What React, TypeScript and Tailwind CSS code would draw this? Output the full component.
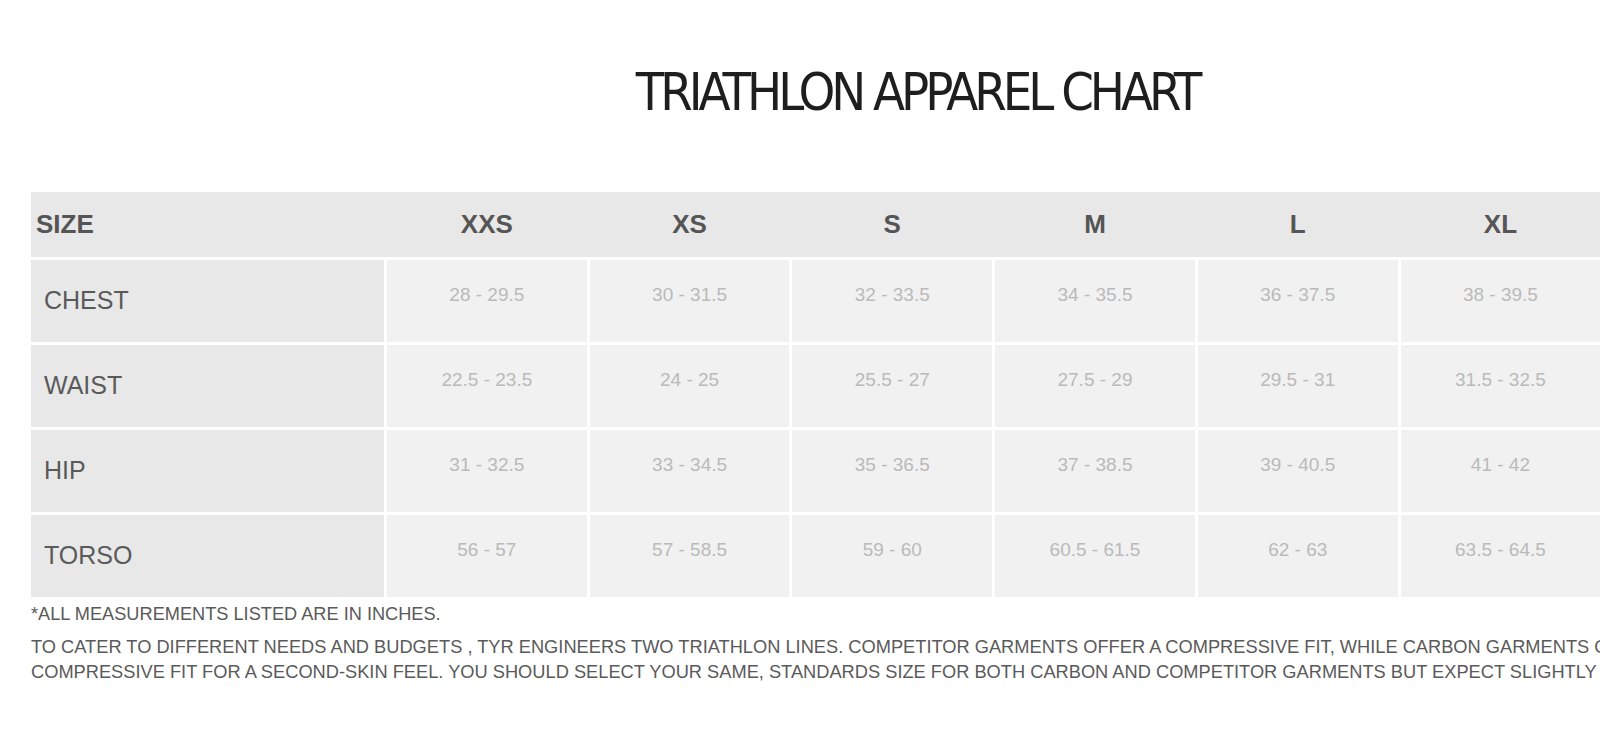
import React from "react";

const sizes = ["XXS", "XS", "S", "M", "L", "XL", "XXL"];
const rows: { label: string; values: string[] }[] = [
  { label: "CHEST", values: ["28 - 29.5", "30 - 31.5", "32 - 33.5", "34 - 35.5", "36 - 37.5", "38 - 39.5", "40 - 41.5"] },
  { label: "WAIST", values: ["22.5 - 23.5", "24 - 25", "25.5 - 27", "27.5 - 29", "29.5 - 31", "31.5 - 32.5", "33 - 34.5"] },
  { label: "HIP", values: ["31 - 32.5", "33 - 34.5", "35 - 36.5", "37 - 38.5", "39 - 40.5", "41 - 42", "42.5 - 44"] },
  { label: "TORSO", values: ["56 - 57", "57 - 58.5", "59 - 60", "60.5 - 61.5", "62 - 63", "63.5 - 64.5", "65 - 66"] },
];

export default function App() {
  return (
    <div className="w-[1600px] h-[746px] overflow-hidden bg-white">
      <div className="w-[1834px] pt-[66px]" style={{ fontFamily: '"Liberation Sans", Arial, sans-serif' }}>
        <h1
          className="text-center text-[52px] leading-[52px] text-[#1e1e1e] tracking-[-4px] font-normal"
          style={{ fontFamily: '"Liberation Sans Narrow", "DejaVu Sans Condensed", "Liberation Sans", sans-serif' }}
        >
          TRIATHLON APPAREL CHART
        </h1>
        <div className="ml-[31px] w-[1772px] mt-[74px]">
          <div className="grid grid-cols-[353px_repeat(7,1fr)] gap-x-[3px] h-[65px] bg-[#e8e8e8] items-center text-[26px] font-bold text-[#555555]">
            <div className="pl-[5px]">SIZE</div>
            {sizes.map((s) => (
              <div key={s} className="text-center">{s}</div>
            ))}
          </div>
          {rows.map((r) => (
            <div key={r.label} className="grid grid-cols-[353px_repeat(7,1fr)] gap-x-[3px] h-[82px] mt-[3px]">
              <div className="bg-[#e8e8e8] flex items-center pl-[13px] text-[25px] text-[#5a5a5a]">{r.label}</div>
              {r.values.map((v, i) => (
                <div key={i} className="bg-[#f1f1f1] flex items-center justify-center pb-[12px] text-[19px] text-[#bababa]">
                  {v}
                </div>
              ))}
            </div>
          ))}
          <div className="mt-[6px] text-[18.2px] leading-[22px] text-[#5a5a5a]">*ALL MEASUREMENTS LISTED ARE IN INCHES.</div>
          <div className="mt-[9px] text-[18.25px] leading-[25px] text-[#5a5a5a] whitespace-nowrap">
            <div>
              TO CATER TO DIFFERENT NEEDS AND BUDGETS , TYR ENGINEERS TWO TRIATHLON LINES. COMPETITOR GARMENTS OFFER A COMPRESSIVE FIT, WHILE CARBON GARMENTS OFFER A MORE
            </div>
            <div>
              COMPRESSIVE FIT FOR A SECOND-SKIN FEEL. YOU SHOULD SELECT YOUR SAME, STANDARDS SIZE FOR BOTH CARBON AND COMPETITOR GARMENTS BUT EXPECT SLIGHTLY DIFFERENT FITS.
            </div>
          </div>
        </div>
      </div>
    </div>
  );
}
